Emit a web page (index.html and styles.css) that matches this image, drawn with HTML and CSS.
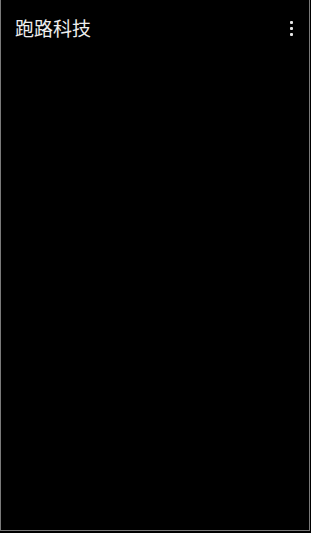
FILE: index.html
```html
<!DOCTYPE html>
<html lang="zh">
<head>
  <meta charset="UTF-8" />
  <meta name="viewport" content="width=device-width, initial-scale=1.0"/>
  <title>跑路科技</title>
  <link rel="stylesheet" href="styles.css">
</head>
<body>
  <div class="screen">
    <div class="toolbar">
      <span class="title">跑路科技</span>
      <div class="menu">
        <span class="dot"></span>
        <span class="dot"></span>
        <span class="dot"></span>
      </div>
    </div>
    <div class="content"></div>
  </div>
</body>
</html>
```

FILE: styles.css
```css
body {
  margin: 0;
  background: #000;
  font-family: "Noto Sans CJK SC", "Noto Sans", sans-serif;
}

.screen {
  width: 308px;
  height: 530px;
  border: 1px solid #7a7a7a;
  border-top: none;
  background: #000;
  display: flex;
  flex-direction: column;
}

.toolbar {
  display: flex;
  align-items: center;
  justify-content: space-between;
  height: 56px;
  padding: 0 16px 0 14px;
}

.title {
  color: #eee;
  font-size: 19px;
  margin-top: -1px;
}

.menu {
  display: flex;
  flex-direction: column;
  gap: 3px;
  margin-top: 0;
}

.dot {
  width: 3px;
  height: 3px;
  background: #e6e6e6;
  border-radius: 1px;
}

.content {
  flex: 1;
}
```
